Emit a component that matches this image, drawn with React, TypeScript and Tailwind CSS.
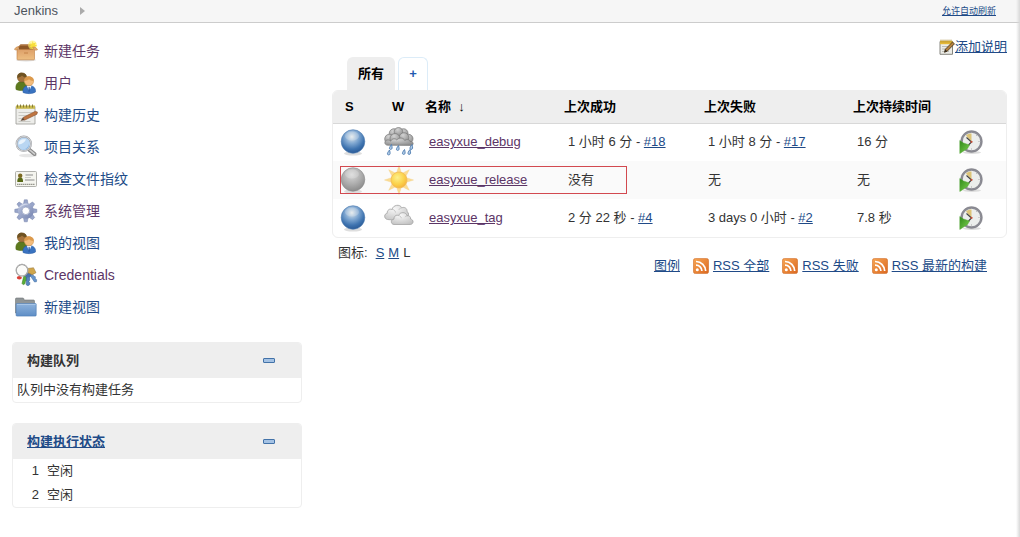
import React, { useState } from 'react';

type Weather = 'rain' | 'sun' | 'cloud';

interface Build {
  time: string;
  number?: string;
}

interface Job {
  name: string;
  status: 'blue' | 'grey';
  weather: Weather;
  success: Build;
  failure: Build;
  duration: string;
  highlighted?: boolean;
}

const jobs: Job[] = [
  { name: 'easyxue_debug', status: 'blue', weather: 'rain', success: { time: '1 小时 6 分', number: '#18' }, failure: { time: '1 小时 8 分', number: '#17' }, duration: '16 分' },
  { name: 'easyxue_release', status: 'grey', weather: 'sun', success: { time: '没有' }, failure: { time: '无' }, duration: '无', highlighted: true },
  { name: 'easyxue_tag', status: 'blue', weather: 'cloud', success: { time: '2 分 22 秒', number: '#4' }, failure: { time: '3 days 0 小时', number: '#2' }, duration: '7.8 秒' },
];

/* Gradients shared by all the icons */
const Gradients = () => (
  <svg className="absolute h-0 w-0" aria-hidden="true">
    <defs>
      <radialGradient id="ballBlue" cx="0.45" cy="0.3" r="0.7">
        <stop offset="0" stopColor="#e2e8ea" />
        <stop offset="0.4" stopColor="#82a9d2" />
        <stop offset="0.75" stopColor="#3f74b0" />
        <stop offset="1" stopColor="#2a5a96" />
      </radialGradient>
      <radialGradient id="ballGrey" cx="0.45" cy="0.3" r="0.75">
        <stop offset="0" stopColor="#d8d8d8" />
        <stop offset="0.5" stopColor="#b0b0b0" />
        <stop offset="1" stopColor="#858585" />
      </radialGradient>
      <radialGradient id="sunFill" cx="0.4" cy="0.35" r="0.7">
        <stop offset="0" stopColor="#fdf08c" />
        <stop offset="0.6" stopColor="#fbd24a" />
        <stop offset="1" stopColor="#f5b03a" />
      </radialGradient>
      <radialGradient id="cloudLight" cx="0.4" cy="0.25" r="0.8">
        <stop offset="0" stopColor="#f8f8f8" />
        <stop offset="1" stopColor="#c2c2c2" />
      </radialGradient>
      <radialGradient id="cloudDark" cx="0.4" cy="0.25" r="0.8">
        <stop offset="0" stopColor="#d2d2d2" />
        <stop offset="1" stopColor="#8c8c8c" />
      </radialGradient>
      <linearGradient id="boxFill" x1="0" y1="0" x2="0" y2="1">
        <stop offset="0" stopColor="#dda069" />
        <stop offset="1" stopColor="#eebf82" />
      </linearGradient>
      <linearGradient id="rssFill" x1="0" y1="0" x2="1" y2="1">
        <stop offset="0" stopColor="#f6a552" />
        <stop offset="1" stopColor="#dc6820" />
      </linearGradient>
      <linearGradient id="folderFill" x1="0" y1="0" x2="0" y2="1">
        <stop offset="0" stopColor="#8fb3dc" />
        <stop offset="1" stopColor="#5e8ec6" />
      </linearGradient>
      <linearGradient id="gearFill" x1="0" y1="0" x2="1" y2="1">
        <stop offset="0" stopColor="#b5bfda" />
        <stop offset="1" stopColor="#7d8bb5" />
      </linearGradient>
      <linearGradient id="arrowFill" x1="0" y1="0" x2="1" y2="1">
        <stop offset="0" stopColor="#2f8a18" />
        <stop offset="1" stopColor="#7ed152" />
      </linearGradient>
    </defs>
  </svg>
);

const SideIcon = ({ children }: { children: React.ReactNode }) => (
  <svg viewBox="0 0 24 24" className="h-6 w-6 shrink-0" aria-hidden="true">{children}</svg>
);

const BoxIcon = () => (
  <SideIcon>
    <ellipse cx="12" cy="21" rx="10" ry="1.4" fill="#ddd" />
    <path d="M4 8 6.500 5.500H18L20 8l-1 3H5z" fill="#8d5726" />
    <path d="M6.500 5.500H18l.8 1.200H5.500z" fill="#b57a44" />
    <circle cx="18.5" cy="6" r="4.500" fill="#fff06b" opacity=".6" />
    <path d="m18.500 2 1 2.300 2.500-.8-.9 2.300 2.200 1-2.300.8.700 2.300-2.400-.9-1.400 1.600-.4-2.400-2.500-.3 1.900-1.500-1-2 2.300.3z" fill="#f8e03c" />
    <path d="M3 10.500h17.500V20c0 .5-.3.800-.8.800H3.800c-.5 0-.8-.3-.8-.8z" fill="url(#boxFill)" stroke="#c07e40" strokeWidth=".6" />
    <path d="M3.200 10.800 5.500 7.300 2.500 8 .300 10.300c.800.8 2 .9 2.900.5zM20.300 10.800 18.500 8l3 .3 2.200 2.300c-1 .8-2.400.8-3.400.2z" fill="#e3aa6c" stroke="#b87a40" strokeWidth=".5" />
    <path d="M10 13.500h4v1h-4z" fill="#c48248" />
  </SideIcon>
);

const UsersIcon = () => (
  <SideIcon>
    <path d="M2 18.500C1.200 13.500 3.500 10.500 7.500 10.500s6 3 5.500 7.500c-3 2-8 2-11 .5z" fill="#5d7a1e" stroke="#49610f" strokeWidth=".5" />
    <circle cx="8" cy="6.500" r="4.600" fill="#a5733c" stroke="#6b4a1c" strokeWidth=".5" />
    <path d="M3.500 7C2.500 3 5.500 1.600 8.500 1.900c3.300.3 4.600 2.600 4 5.100-1.500-.3-3.300-1.200-4.500-2.500C6.800 5.800 5.300 6.600 3.500 7z" fill="#6f5322" />
    <path d="M9 21.500c-.6-4.500 1.700-7 6-7s7 2.500 6.500 6.500c-2.500 2-9.500 2.200-12.500.5z" fill="#3a73c0" stroke="#2459a0" strokeWidth=".5" />
    <path d="m12.800 14.800 2.300 5.500 2.500-5.500z" fill="#f4f6fa" />
    <path d="m14.600 16-.5 4 1 1.500 1-1.500-.5-4z" fill="#2b5fa8" />
    <circle cx="15" cy="10.200" r="4.600" fill="#f3bc7c" stroke="#cf8c41" strokeWidth=".5" />
    <path d="M10.500 9.800C10 6.800 12.200 5.400 15.200 5.600c3.200.2 5 2 4.300 4.400-2-.2-3.200-.8-4.500-1.800-1.300 1-2.700 1.500-4.500 1.600z" fill="#dc9a4c" />
  </SideIcon>
);

const HistoryIcon = () => (
  <SideIcon>
    <path d="M2 3.500h19v17.500H2z" fill="#ededea" stroke="#9a9a95" strokeWidth=".8" />
    <path d="M2 2.500h19v3.300H2z" fill="#c9ba4e" />
    <path d="M3.500 1.500v3M6.500 1.500v3M9.500 1.500v3M12.500 1.500v3M15.500 1.500v3M18.500 1.500v3" stroke="#7d7434" strokeWidth=".9" />
    <path d="M4.500 9.500h14M4.500 12.500h9M4.500 15.500h5M4.500 18.500h12" stroke="#c0c0bb" strokeWidth=".8" />
    <path d="m9 14.500 12.300-6.200 2.200.8-.6 2.200L10.500 17.200z" fill="#bf7541" stroke="#7b4524" strokeWidth=".5" />
    <path d="m9 14.500 1.500 2.700-4 .6z" fill="#5c4533" />
  </SideIcon>
);

const SearchIcon = () => (
  <SideIcon>
    <ellipse cx="14" cy="20.500" rx="9" ry="1.800" fill="#e6e6e6" />
    <path d="m15 14.500 5.500 4.500" stroke="#8a8a8a" strokeWidth="4" strokeLinecap="round" />
    <path d="m15.800 15 4.700 3.800" stroke="#d0d0d0" strokeWidth="1.600" strokeLinecap="round" />
    <circle cx="9.800" cy="8.800" r="7.300" fill="#b9d6f2" stroke="#9a9da3" strokeWidth="1.800" />
    <circle cx="9.800" cy="8.800" r="7.300" fill="none" stroke="#e6e6e6" strokeWidth=".8" />
    <path d="M4.500 9.500C4.300 5.500 7.500 3.500 12 4.300c-1 3-3.500 4.800-7.500 5.200z" fill="#e9f3fc" />
    <path d="M8 14.300c3.800.3 6.500-1.700 7-5.500.3 4-2.500 6.500-7 5.500z" fill="#7fb0e2" />
  </SideIcon>
);

const FingerprintIcon = () => (
  <SideIcon>
    <rect x="1.500" y="4.500" width="21" height="15" rx="1" fill="#f5f5ef" stroke="#a9a9a4" strokeWidth=".9" />
    <path d="M3.300 15c-.3-3.300 1-4.500 2.900-4.500S9.300 11.700 9 15z" fill="#596a17" />
    <circle cx="6.200" cy="8.800" r="2.200" fill="#7d6a22" />
    <path d="M11.500 8h7.500M11 13h9.500" stroke="#8b8b8b" strokeWidth="1.200" />
    <path d="M3 17.300h18" stroke="#96968d" strokeWidth="1.200" strokeDasharray="1.500 .5" />
    <path d="M11 10.500h6" stroke="#c5c5c2" strokeWidth=".8" />
  </SideIcon>
);

const GearIcon = () => (
  <SideIcon>
    <g fill="#98a5c9" stroke="#7482aa" strokeWidth=".5">
      <path d="m10.300.8h3l.9 5h-4.800zM10.300 22.800h3l.9-5h-4.800zM.800 10.300v3l5 .9V9.400zM22.800 10.300v3l-5 .9V9.400z" />
      <path d="m10.300.8h3l.9 5h-4.800zM10.300 22.800h3l.9-5h-4.800zM.800 10.300v3l5 .9V9.400zM22.800 10.300v3l-5 .9V9.400z" transform="rotate(45 11.800 11.800)" />
    </g>
    <circle cx="11.800" cy="11.800" r="5.900" fill="none" stroke="url(#gearFill)" strokeWidth="4" />
    <path d="M4.800 9.500C6.500 5.500 10.500 4 14.500 5.300 10.500 5.800 7.500 7 4.800 9.500z" fill="#d0d8ea" />
    <circle cx="11.800" cy="11.800" r="3.800" fill="#fff" stroke="#8390b6" strokeWidth=".7" />
  </SideIcon>
);

const CredentialsIcon = () => (
  <SideIcon>
    <path d="m10 12-2 8.500 1.300 1.300 1.800-1.200.2-2 1.200-1 .8-5z" fill="#58ad36" stroke="#36751e" strokeWidth=".5" />
    <path d="m12.500 11.500-.3 10.300 1.800 1 1.800-1.300v-2l-1-1 1-1.500-.6-5.700z" fill="#5685bf" stroke="#2e588d" strokeWidth=".5" />
    <path d="m15 11 5.500 8 2-.3.200-2-1.500-1.200.2-1.700-1.700-.8-2-3.600z" fill="#6795cc" stroke="#3a689e" strokeWidth=".5" />
    <circle cx="14" cy="11" r="3.500" fill="#4c72a7" />
    <path d="m13.500 5.500 6-.8 2.500 5-3.700 2-4.500-2z" fill="#d0a64b" stroke="#927338" strokeWidth=".5" />
    <ellipse cx="5.300" cy="14.700" rx="2.500" ry="1.800" fill="#dc3f36" />
    <circle cx="8" cy="7.200" r="5.800" fill="#fcfcfa" stroke="#8a8a8a" strokeWidth="1.200" />
    <circle cx="8" cy="7.200" r="6" fill="none" stroke="#ddd" strokeWidth=".5" />
  </SideIcon>
);

const FolderIcon = () => (
  <SideIcon>
    <path d="M1.500 4c0-.6.300-1 1-1h6.400c.7 0 .9.500 1.300 2h9.300c.6 0 1 .4 1 1v12h-19z" fill="#8f9597" stroke="#6e7476" strokeWidth=".6" />
    <path d="M3 8.500h18.500c.5 0 .7.300.7.800v10.900c0 .6-.4.900-1 .9H3c-.6 0-.9-.3-.9-.9V9.300c0-.5.400-.8.900-.8z" fill="url(#folderFill)" stroke="#4a7ab4" strokeWidth=".6" />
    <path d="M3 9.400h18.500" stroke="#b9d2ee" strokeWidth=".7" />
  </SideIcon>
);

const BallIcon = ({ color }: { color: Job['status'] }) => (
  <svg viewBox="0 0 26 28" className="block h-7 w-[26px]" role="img" aria-label={color === 'blue' ? '成功' : '没有'}>
    <ellipse cx="13" cy="25.500" rx="9" ry="2" fill="#dedede" />
    <circle cx="13" cy="13.500" r="11.800" fill={color === 'blue' ? 'url(#ballBlue)' : 'url(#ballGrey)'} stroke={color === 'blue' ? '#4f7cb0' : '#8a8a8a'} strokeWidth=".6" />
    <ellipse cx="12" cy="8" rx="7" ry="4.500" fill="#fff" opacity=".2" />
  </svg>
);

const sunAngles = [0, 45, 90, 135, 180, 225, 270, 315];

const WeatherIcon = ({ kind }: { kind: Weather }) => (
  <svg viewBox="0 0 30 30" className="block h-[30px] w-[30px]" role="img" aria-label={kind}>
    {kind === 'sun' && (
      <>
        {sunAngles.map(angle => (
          <path key={angle} d="m15 .5 2.300 7h-4.600z" fill="#fbdc92" stroke="#f5cf84" strokeWidth=".4" transform={`rotate(${angle} 15 15)`} />
        ))}
        <circle cx="15" cy="15" r="8" fill="url(#sunFill)" stroke="#f3bb57" strokeWidth=".8" />
      </>
    )}
    {kind === 'rain' && (
      <>
        <g fill="url(#cloudDark)" stroke="#7a7a7a" strokeWidth=".7">
          <circle cx="10" cy="6.500" r="4.800" />
          <circle cx="19.500" cy="6.200" r="4.500" />
          <circle cx="14.500" cy="4.800" r="4.300" />
          <circle cx="5.500" cy="12" r="4.800" />
          <circle cx="24.500" cy="11.800" r="4.500" />
          <circle cx="20" cy="10.500" r="4.800" />
          <circle cx="11" cy="11.500" r="5" />
          <path d="M3.500 18.200c-3-.2-3.500-3.700-1.200-4.900 2-.8 3.500-.3 4.500.9.900-2.600 4.200-3.400 6-1.200 2.500-3 6.700-2.400 8 .5 2.300-1.800 5-.8 5.200 1 3.400-.6 4.300 3.400 1.500 3.900z" />
        </g>
        <g fill="#b4cde7" stroke="#4d7cb0" strokeWidth=".9">
          <path d="M7.500 17.500c-2.400 3-2.700 4.600-1 4.900 1.900.1 2-1.700 1-4.900zM14.500 18.500c-2.400 3-2.700 4.600-1 4.900 1.900.1 2-1.700 1-4.900zM28 17.500c-2.400 3-2.700 4.600-1 4.900 1.900.1 2-1.700 1-4.900z" />
          <path d="M5.500 23c-2.400 3-2.700 4.600-1 4.900 1.900.1 2-1.700 1-4.900zM20.500 22.500c-2.400 3-2.700 4.600-1 4.900 1.900.1 2-1.700 1-4.900zM26 22.500c-2.400 3-2.700 4.600-1 4.900 1.900.1 2-1.700 1-4.900z" />
        </g>
      </>
    )}
    {kind === 'cloud' && (
      <g fill="url(#cloudLight)" stroke="#a3a3a3" strokeWidth=".8">
        <path d="M3.500 16.500C-.500 15.800 0 10.500 3.300 10.200 2.800 7.300 5.600 5.300 8 6.500c1-4.700 8-5.800 9.800-1.700C20.500 3.500 23.500 5.500 23 8.500c2 1 2 4 .5 5.500L14 17.500z" />
        <path d="M8 6.500c1.700-.2 3.300 1 3.500 3M17.800 4.800c-1.500.1-2.500 1-3 2" fill="none" stroke="#bbb" />
        <path d="M10 21.500c-3.500-.2-3.700-5 0-5.400-.3-3 2.400-4.600 4.500-3.500 1.500-4 7.500-4 8.500.2 2.300-.7 4 1.200 3.500 3.200 3.600.7 3.300 5.200-.2 5.500z" />
        <path d="M14.500 12.600c1.500 0 2.600 1 2.800 2.600M23 12.800c-1 .1-1.700.700-2 1.400" fill="none" stroke="#bbb" />
      </g>
    )}
  </svg>
);

const ClockIcon = () => (
  <svg viewBox="0 0 24 24" className="block h-6 w-6" aria-hidden="true">
    <ellipse cx="13" cy="22.500" rx="9" ry="1.400" fill="#ddd" />
    <circle cx="12.500" cy="11.500" r="9.800" fill="#eceeec" stroke="#8c8c94" strokeWidth="2.200" />
    <circle cx="12.500" cy="11.500" r="10.900" fill="none" stroke="#77777e" strokeWidth=".4" />
    <path d="M12.500 12 7 5.500c1.500-1.400 3.300-2 5.500-2z" fill="#ddc579" />
    <path d="m7.500 7.500 5 4.500-3 3" fill="none" stroke="#454545" strokeWidth="1.200" />
    <circle cx="12.500" cy="11.800" r="1.100" fill="#c7503a" />
    <path d="M19.500 11.500h1M12.500 18.500v1M17.500 6l.7-1" stroke="#aaa" />
    <path d="M.800 10.500 4.500 13l6 2-2 3.500-7.700 5z" fill="url(#arrowFill)" stroke="#55a638" strokeWidth=".5" />
  </svg>
);

const RssIcon = () => (
  <svg viewBox="0 0 16 16" className="h-4 w-4" aria-hidden="true">
    <rect x=".4" y=".4" width="15.200" height="15.200" rx="2.200" fill="url(#rssFill)" stroke="#cf6a25" strokeWidth=".6" />
    <circle cx="4.300" cy="11.800" r="1.500" fill="#fff" />
    <path d="M3 7.200a5.800 5.800 0 0 1 5.900 5.900M3 3.500a9.600 9.600 0 0 1 9.700 9.600" fill="none" stroke="#fff" strokeWidth="1.700" />
  </svg>
);

const NotepadIcon = () => (
  <svg viewBox="0 0 16 16" className="h-4 w-4" aria-hidden="true">
    <path d="M1 2.500h12.500v12.800H1z" fill="#ecece7" stroke="#787872" strokeWidth=".9" />
    <path d="M1 1.800h12.500v3.400H1z" fill="#e6b936" />
    <path d="M2 .6v3M4 .6v3M6 .6v3M8 .6v3M10 .6v3M12 .6v3" stroke="#a38531" strokeWidth=".8" />
    <path d="M3 7.500h6M3 10h4M3 12.500h7" stroke="#b0b0aa" strokeWidth=".8" />
    <path d="m5.500 13.300.8-3L13.500 3l2 1.800-7.300 7.400z" fill="#b5803e" stroke="#423216" strokeWidth=".8" />
    <path d="m5.500 13.300.8-3 1.900 1.900z" fill="#2f2922" />
  </svg>
);

const tasks = [
  { label: '新建任务', icon: <BoxIcon />, visited: true },
  { label: '用户', icon: <UsersIcon />, visited: true },
  { label: '构建历史', icon: <HistoryIcon /> },
  { label: '项目关系', icon: <SearchIcon /> },
  { label: '检查文件指纹', icon: <FingerprintIcon /> },
  { label: '系统管理', icon: <GearIcon />, visited: true },
  { label: '我的视图', icon: <UsersIcon /> },
  { label: 'Credentials', icon: <CredentialsIcon />, visited: true },
  { label: '新建视图', icon: <FolderIcon /> },
];

interface PaneProps {
  title: React.ReactNode;
  name: string;
  children: React.ReactNode;
}

const Pane: React.FC<PaneProps> = ({ title, name, children }) => {
  const [open, setOpen] = useState(true);

  return (
    <section className="overflow-hidden rounded border border-[#eeeeee]">
      <div className="flex h-[35px] items-center justify-between bg-[#eeeeee] pr-[26px] pl-[14px]">
        <h2 className="font-bold">{title}</h2>
        <button type="button" aria-label={name} aria-expanded={open} onClick={() => setOpen(!open)} className="flex h-4 w-3 items-center">
          <span className="h-[5px] w-3 rounded-[1px] border border-[#4272a8] bg-[#a4c2e4]" />
        </button>
      </div>
      {open && children}
    </section>
  );
};

const BuildCell = ({ build }: { build: Build }) => (
  <td className="pl-2">
    {build.time}
    {build.number && <> - <a href="#build" className="text-[#204a87] underline">{build.number}</a></>}
  </td>
);

const JobTable = () => (
  <div className="overflow-hidden rounded-md border border-[#eeeeee]">
    <table className="w-full table-fixed text-left whitespace-nowrap">
      <colgroup>
        <col className="w-[43px]" />
        <col className="w-[45px]" />
        <col className="w-[139px]" />
        <col className="w-[140px]" />
        <col className="w-[149px]" />
        <col className="w-[102px]" />
        <col />
      </colgroup>
      <thead>
        <tr className="h-8 border-b border-[#d8d8d8] bg-[#eeeeee] text-black">
          <th className="pl-3">S</th>
          <th className="pl-4">W</th>
          <th className="pl-1">名称&nbsp; ↓</th>
          <th className="pl-1">上次成功</th>
          <th className="pl-1">上次失败</th>
          <th className="pl-1">上次持续时间</th>
          <th />
        </tr>
      </thead>
      <tbody>
        {jobs.map(job => (
          <tr key={job.name} className="h-[38px] even:bg-[#fafafa]">
            <td className="relative pl-[7px]">
              <BallIcon color={job.status} />
              {job.highlighted && <span className="absolute top-[5px] left-[7px] z-10 h-7 w-[287px] border border-[#d2494f]" />}
            </td>
            <td className="pl-2"><WeatherIcon kind={job.weather} /></td>
            <td className="pl-2"><a href="#job" className="text-[#5c3566] underline">{job.name}</a></td>
            <BuildCell build={job.success} />
            <BuildCell build={job.failure} />
            <td className="pl-2">{job.duration}</td>
            <td className="pl-2">
              <button type="button" aria-label="立即构建" className="block"><ClockIcon /></button>
            </td>
          </tr>
        ))}
      </tbody>
    </table>
  </div>
);

const App: React.FC = () => {
  return (
    <div className="relative min-h-screen bg-white font-['Liberation_Sans','Noto_Sans_CJK_SC',sans-serif] text-[13px] leading-4 text-[#333333]">
      <Gradients />

      {/* Breadcrumb bar */}
      <header className="flex h-[23px] items-center justify-between border-b border-[#cccccc] bg-[#f6f6f6] pr-6 pl-[14px]">
        <nav className="flex items-center gap-[22px]">
          <a href="#home" className="text-[#4d545d]">Jenkins</a>
          <svg viewBox="0 0 5 8" className="h-2 w-[5px]" aria-hidden="true"><path d="m0 0 5 4-5 4z" fill="#aaa" /></svg>
        </nav>
        <a href="#refresh" className="text-[9px] text-[#204a87] underline">允许自动刷新</a>
      </header>

      <div className="flex gap-[30px] pr-[13px] pl-3">
        {/* Side panel */}
        <aside className="w-[290px] shrink-0 pt-3">
          <ul className="text-sm">
            {tasks.map(task => (
              <li key={task.label} className="flex h-8 items-center">
                <a href="#task" className={`flex items-center gap-[6px] pl-[2px] ${task.visited ? 'text-[#5c3566]' : 'text-[#204a87]'}`}>
                  {task.icon}
                  {task.label}
                </a>
              </li>
            ))}
          </ul>

          <div className="mt-[19px] flex flex-col gap-5">
            <Pane title="构建队列" name="构建队列">
              <p className="px-1 py-1">队列中没有构建任务</p>
            </Pane>
            <Pane title={<a href="#computer" className="text-[#204a87] underline">构建执行状态</a>} name="构建执行状态">
              <table>
                <tbody>
                  {[1, 2].map(n => (
                    <tr key={n} className="h-6">
                      <td className="w-[26px] text-right">{n}</td>
                      <td className="pl-2">空闲</td>
                    </tr>
                  ))}
                </tbody>
              </table>
            </Pane>
          </div>
        </aside>

        {/* Main panel */}
        <main className="min-w-0 flex-1 pt-4">
          <div className="flex h-[18px] justify-end">
            <a href="#description" className="flex h-4 items-center text-[#204a87] underline">
              <NotepadIcon />
              添加说明
            </a>
          </div>

          <div className="flex gap-[3px] pl-[15px] font-bold">
            <a href="#all" className="flex h-[33px] w-12 items-center justify-center rounded-t-md bg-[#eeeeee] text-black">所有</a>
            <a href="#new-view" className="flex h-[33px] w-[30px] items-center justify-center rounded-t-md border border-b-0 border-[#dcecf8] text-[#1f5bb0]">+</a>
          </div>

          <JobTable />

          <div className="flex items-start justify-between pr-5 pl-[6px]">
            <div className="flex gap-1 pt-[7px]">
              <span className="pr-1">图标:</span>
              <a href="#small" className="text-[#204a87] underline">S</a>
              <a href="#medium" className="text-[#204a87] underline">M</a>
              <span>L</span>
            </div>
            <div className="flex gap-[13px] pt-5 text-[#204a87]">
              <a href="#legend" className="underline">图例</a>
              {['RSS 全部', 'RSS 失败', 'RSS 最新的构建'].map(label => (
                <a key={label} href="#rss" className="flex items-center gap-1 underline">
                  <RssIcon />
                  {label}
                </a>
              ))}
            </div>
          </div>
        </main>
      </div>

      {/* Soft shade along the right edge of the window */}
      <div className="absolute inset-y-0 right-0 w-1 bg-gradient-to-r from-transparent to-[#d8d8d8]" />
    </div>
  );
};

export default App;
